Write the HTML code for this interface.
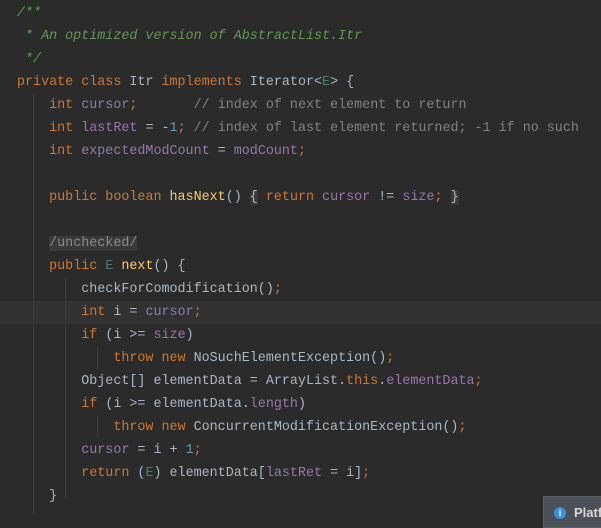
<!DOCTYPE html>
<html><head><style>
body{margin:0;width:601px;height:521px;background:#2b2b2b;overflow:hidden;position:relative;font-family:"Liberation Mono",monospace;font-size:13.38px;color:#a9b7c6}
.l{position:absolute;left:17px;height:23px;line-height:23px;white-space:pre}
.k{color:#cc7832}.c{color:#808080}.d{color:#629755;font-style:italic}.f{color:#9876aa}.m{color:#ffc66d}.n{color:#6897bb}.t{color:#507874}
.fold{background:#3a3a3a;border-radius:2px}
.g{position:absolute;width:1px;background:#393939}
</style></head><body>
<div style="position:absolute;left:0;top:301px;width:601px;height:23px;background:#323232"></div>
<div class="g" style="left:33px;top:94px;height:420px"></div>
<div class="g" style="left:65px;top:278px;height:220px"></div>
<div class="g" style="left:97px;top:346px;height:23px"></div>
<div class="g" style="left:97px;top:416px;height:23px"></div>
<div class="l d" style="top:2px">/**</div>
<div class="l d" style="top:25px"> * An optimized version of AbstractList.Itr</div>
<div class="l d" style="top:48px"> */</div>
<div class="l" style="top:71px"><span class="k">private class </span>Itr <span class="k">implements </span>Iterator&lt;<span class="t">E</span>&gt; {</div>
<div class="l" style="top:94px">    <span class="k">int </span><span class="f">cursor</span><span class="k">;</span>       <span class="c">// index of next element to return</span></div>
<div class="l" style="top:117px">    <span class="k">int </span><span class="f">lastRet </span>= -<span class="n">1</span><span class="k">;</span> <span class="c">// index of last element returned; -1 if no such</span></div>
<div class="l" style="top:140px">    <span class="k">int </span><span class="f">expectedModCount </span>= <span class="f">modCount</span><span class="k">;</span></div>
<div class="l" style="top:186px">    <span class="k">public boolean </span><span class="m">hasNext</span>() <span class="fold">{</span> <span class="k">return </span><span class="f">cursor </span>!= <span class="f">size</span><span class="k">;</span> <span class="fold">}</span></div>
<div class="l" style="top:232px">    <span class="fold" style="color:#8a8a8a">/unchecked/</span></div>
<div class="l" style="top:255px">    <span class="k">public </span><span class="t">E </span><span class="m">next</span>() {</div>
<div class="l" style="top:278px">        checkForComodification()<span class="k">;</span></div>
<div class="l" style="top:301px">        <span class="k">int </span>i = <span class="f">cursor</span><span class="k">;</span></div>
<div class="l" style="top:324px">        <span class="k">if </span>(i &gt;= <span class="f">size</span>)</div>
<div class="l" style="top:347px">            <span class="k">throw new </span>NoSuchElementException()<span class="k">;</span></div>
<div class="l" style="top:370px">        Object[] elementData = ArrayList.<span class="k">this</span>.<span class="f">elementData</span><span class="k">;</span></div>
<div class="l" style="top:393px">        <span class="k">if </span>(i &gt;= elementData.<span class="f">length</span>)</div>
<div class="l" style="top:416px">            <span class="k">throw new </span>ConcurrentModificationException()<span class="k">;</span></div>
<div class="l" style="top:439px">        <span class="f">cursor </span>= i + <span class="n">1</span><span class="k">;</span></div>
<div class="l" style="top:462px">        <span class="k">return </span>(<span class="t">E</span>) elementData[<span class="f">lastRet </span>= i]<span class="k">;</span></div>
<div class="l" style="top:485px">    }</div>
<div style="position:absolute;left:543px;top:496px;width:60px;height:30px;background:#4b5157;border:1px solid #5a5f63"></div>
<div style="position:absolute;left:554px;top:507px;width:12px;height:12px;border-radius:50%;background:#3d8fd8;color:#fff;font:bold 9px 'Liberation Sans',sans-serif;text-align:center;line-height:12px">i</div>
<div style="position:absolute;left:574px;top:505px;color:#d8d8d8;font:bold 13px 'Liberation Sans',sans-serif">Platf</div>
</body></html>
